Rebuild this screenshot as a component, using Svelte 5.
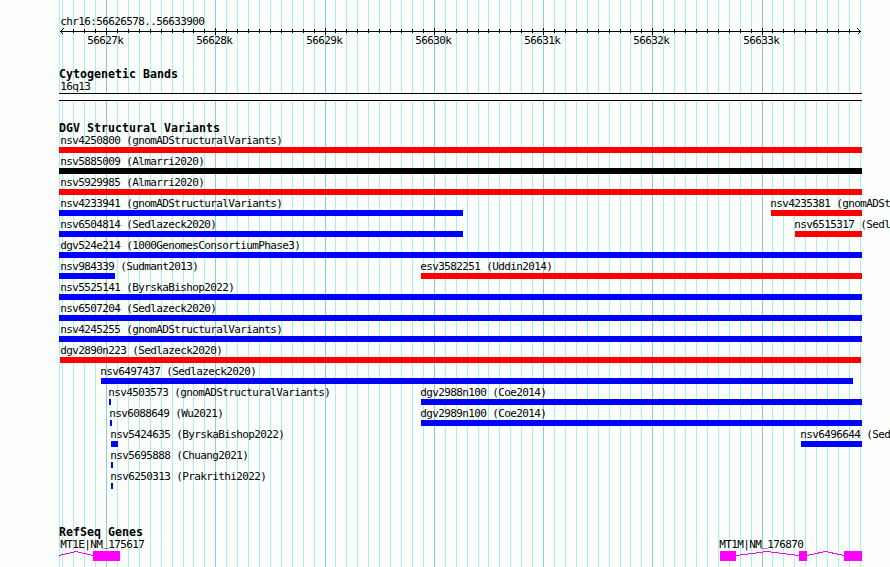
<script lang="ts">
  interface Feature {
    name: string;
    start: number;
    end: number;
    color: "red" | "blue" | "black";
  }

  interface Gene {
    name: string;
    labelX: number;
    exons: [number, number][];
    introns: [number, number][];
  }

  const LEFT = 59;
  const RIGHT = 862;
  const ORIGIN = 106.06;
  const STEP = 10.925;

  const region = "chr16:56626578..56633900";

  // one line per 100 bp, a major one per 1 kb
  const ticks = Array.from({ length: 74 }, (_, i) => {
    const k = i - 4;
    return {
      x: Math.round(ORIGIN + k * STEP),
      major: k % 10 === 0,
      label: `${56627 + k / 10}k`,
    };
  }).filter((t) => t.x < RIGHT);
  const majorTicks = ticks.filter((t) => t.major);

  const f = (
    name: string,
    color: Feature["color"],
    start = LEFT,
    end = RIGHT,
  ): Feature => ({ name, color, start, end });

  const rows: Feature[][] = [
    [f("nsv4250800 (gnomADStructuralVariants)", "red")],
    [f("nsv5885009 (Almarri2020)", "black")],
    [f("nsv5929985 (Almarri2020)", "red")],
    [
      f("nsv4233941 (gnomADStructuralVariants)", "blue", LEFT, 463),
      f("nsv4235381 (gnomADStructuralVariants)", "red", 771),
    ],
    [
      f("nsv6504814 (Sedlazeck2020)", "blue", LEFT, 463),
      f("nsv6515317 (Sedlazeck2020)", "red", 795),
    ],
    [f("dgv524e214 (1000GenomesConsortiumPhase3)", "blue")],
    [
      f("nsv984339 (Sudmant2013)", "blue", LEFT, 115),
      f("esv3582251 (Uddin2014)", "red", 421),
    ],
    [f("nsv5525141 (ByrskaBishop2022)", "blue")],
    [f("nsv6507204 (Sedlazeck2020)", "blue")],
    [f("nsv4245255 (gnomADStructuralVariants)", "blue")],
    [f("dgv2890n223 (Sedlazeck2020)", "red", 60, 861)],
    [f("nsv6497437 (Sedlazeck2020)", "blue", 101, 853)],
    [
      f("nsv4503573 (gnomADStructuralVariants)", "blue", 109, 111),
      f("dgv2988n100 (Coe2014)", "blue", 421),
    ],
    [
      f("nsv6088649 (Wu2021)", "blue", 110, 112),
      f("dgv2989n100 (Coe2014)", "blue", 421),
    ],
    [
      f("nsv5424635 (ByrskaBishop2022)", "blue", 111, 118),
      f("nsv6496644 (Sedlazeck2020)", "blue", 801),
    ],
    [f("nsv5695888 (Chuang2021)", "blue", 111, 113)],
    [f("nsv6250313 (Prakrithi2022)", "blue", 111, 113)],
  ];

  const genes: Gene[] = [
    {
      name: "MT1E|NM_175617",
      labelX: 60.2,
      exons: [[93, 120]],
      introns: [[59, 93]],
    },
    {
      name: "MT1M|NM_176870",
      labelX: 719.2,
      exons: [
        [720, 736],
        [799, 807],
        [844, 862],
      ],
      introns: [
        [736, 799],
        [807, 844],
      ],
    },
  ];

  const labelX = (start: number) => Math.max(start - 1, 60) + 0.2;
</script>

<div class="browser">
  <svg class="grid" width="890" height="567" shape-rendering="crispEdges">
    <rect class="minor" x={LEFT} y="0" width="1" height="567" />
    {#each ticks as tick}
      <rect class={tick.major ? "major" : "minor"} x={tick.x} y="0" width="1" height="567" />
    {/each}
  </svg>

  <section class="ruler">
    <div class="label region">{region}</div>
    <svg class="axis" width="890" height="7" shape-rendering="crispEdges">
      <rect x="60" y="3" width="801" height="1" />
      {#each ticks as tick}
        {#if tick.major}
          <rect x={tick.x} y="0" width="1" height="7" />
        {:else if tick.x > 65 && tick.x < 855}
          <rect x={tick.x} y="1" width="1" height="4" />
        {/if}
      {/each}
      <path class="arrow" d="M63.5 .5L60.5 3.5L63.5 6.5M857.5 .5L860.5 3.5L857.5 6.5" />
    </svg>
    <div class="lane">
      {#each majorTicks as tick}
        <span class="label" style="left: {tick.x - 18.8}px">{tick.label}</span>
      {/each}
    </div>
  </section>

  <section class="cytoband">
    <h2>Cytogenetic Bands</h2>
    <div class="label band-name">16q13</div>
    <div class="band"></div>
  </section>

  <section class="variants">
    <h2>DGV Structural Variants</h2>
    {#each rows as row}
      <div class="row">
        {#each row as item}
          <span class="label" style="left: {labelX(item.start)}px">{item.name}</span>
          <span
            class="bar {item.color}"
            style="left: {item.start}px; width: {item.end - item.start}px"
          ></span>
        {/each}
      </div>
    {/each}
  </section>

  <section class="genes">
    <h2>RefSeq Genes</h2>
    <div class="lane">
      {#each genes as gene}
        {@const [prefix, accession] = gene.name.split("_")}
        <span class="label" style="left: {gene.labelX}px"
          >{prefix}<span class="underscore">_</span>{accession}</span
        >
      {/each}
    </div>
    <svg class="models" width="890" height="10" shape-rendering="crispEdges">
      {#each genes as gene}
        {#each gene.introns as [a, b]}
          <polyline points="{a},4.5 {(a + b) / 2},0.5 {b},4.5" />
        {/each}
        {#each gene.exons as [a, b]}
          <rect x={a} y="0" width={b - a} height="10" />
        {/each}
      {/each}
    </svg>
  </section>
</div>

<style>
  :global(body) {
    margin: 0;
    background: #fcfefc;
  }
  .browser {
    position: relative;
    width: 890px;
    height: 567px;
    overflow: hidden;
    background: #fcfefc;
    color: #000;
    font-family: "DejaVu Sans Mono", monospace;
  }
  .grid {
    position: absolute;
    top: 0;
    left: 0;
  }
  .minor {
    fill: #aceeec;
  }
  .major {
    fill: #84ceec;
  }
  section {
    position: relative;
  }
  svg {
    display: block;
  }
  h2 {
    margin: 0 0 0 59px;
    font-size: 11.6px;
    font-weight: 700;
    line-height: 14px;
    height: 12px;
    letter-spacing: 0.02px;
    white-space: pre;
  }
  .label {
    font-size: 11px;
    line-height: 16px;
    height: 14px;
    letter-spacing: -0.622px;
    white-space: pre;
  }
  .lane,
  .row {
    position: relative;
    height: 14px;
  }
  .lane .label,
  .row .label {
    position: absolute;
    top: 0;
  }
  /* lifted clear of the exon boxes below */
  .underscore {
    position: relative;
    top: -2px;
  }
  .ruler {
    padding-top: 14px;
  }
  .region,
  .band-name {
    margin-left: 60.2px;
  }
  .arrow {
    fill: none;
    stroke: #000;
  }
  .ruler .lane {
    margin-top: -2px;
  }
  .cytoband {
    padding-top: 20px;
  }
  .band {
    box-sizing: border-box;
    width: 803px;
    height: 8px;
    margin-left: 59px;
    border-top: 1px solid #000;
    border-bottom: 1px solid #000;
    background: #fcfefc;
  }
  .variants {
    padding-top: 20px;
  }
  .row {
    height: 21px;
  }
  .bar {
    position: absolute;
    top: 14px;
    height: 6px;
  }
  .red {
    background: #f00;
  }
  .blue {
    background: #00f;
  }
  .black {
    background: #000;
  }
  .genes {
    padding-top: 35px;
  }
  .models rect {
    fill: #f0f;
  }
  .models polyline {
    fill: none;
    stroke: #f0f;
  }
</style>
